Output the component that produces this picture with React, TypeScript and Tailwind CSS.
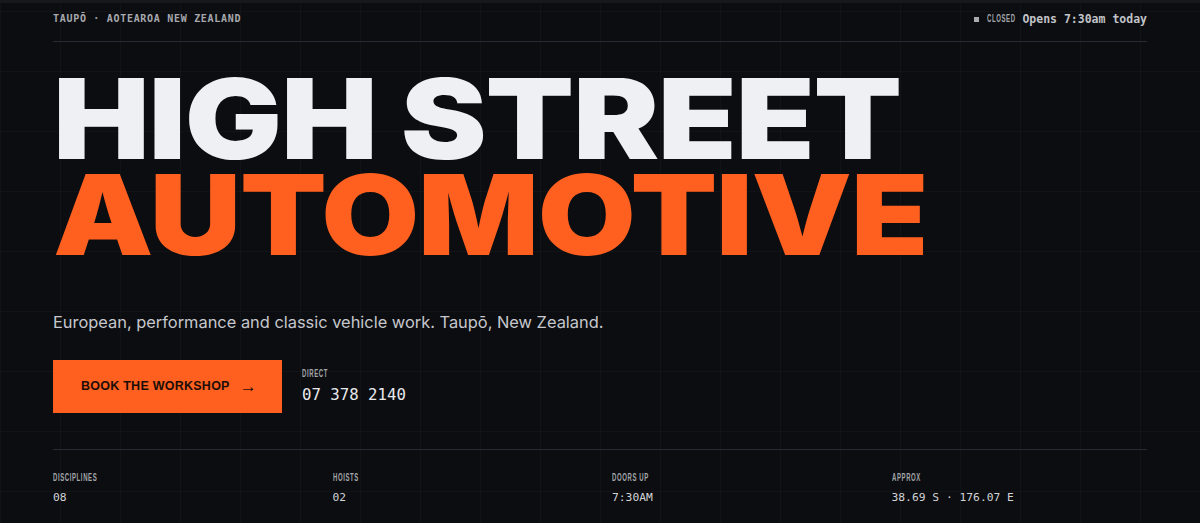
import React from "react";

const mono = "font-['DejaVu_Sans_Mono','Liberation_Mono',monospace]";

function Tiny({ children }: { children: React.ReactNode }) {
  return (
    <span className="inline-block origin-left scale-x-[0.6] whitespace-nowrap font-['Liberation_Sans',Arial,sans-serif] text-[10px] font-bold uppercase leading-[10px] tracking-[0.1em] text-[#a3a5ab]">
      {children}
    </span>
  );
}

const stats = [
  { label: "Disciplines", value: "08" },
  { label: "Hoists", value: "02" },
  { label: "Doors up", value: "7:30AM" },
  { label: "Approx", value: "38.69 S · 176.07 E" },
];

export default function App() {
  return (
    <div className="min-h-[523px] w-full overflow-hidden border-t-[3px] border-[#17181c] bg-[#0c0d10] bg-[linear-gradient(to_right,rgba(255,255,255,0.025)_1px,transparent_1px),linear-gradient(to_bottom,rgba(255,255,255,0.025)_1px,transparent_1px)] bg-[size:60px_60px] bg-[position:0px_8px]">
      <div className="px-[53px]">
        {/* top bar */}
        <div className="flex items-center justify-between border-b border-[#272a33] pt-[9px] pb-[15px]">
          <span className={`${mono} text-[10px] font-bold leading-[14px] tracking-[0.07em] text-[#a6a8ae]`}>
            TAUPŌ · AOTEAROA NEW ZEALAND
          </span>
          <div className="flex items-center">
            <span className="mr-[8px] h-[5px] w-[5px] bg-[#a9abb0]" />
            <Tiny>Closed</Tiny>
            <span className={`${mono} -ml-[12px] text-[11.5px] font-bold leading-[14px] text-[#c1c3c8]`}>
              Opens 7:30am today
            </span>
          </div>
        </div>

        {/* heading */}
        <h1 className="mt-[29px] font-['Inter','Liberation_Sans',sans-serif] text-[111px] font-black uppercase leading-[96px] tracking-[-0.01em]">
          <span className="block origin-left scale-x-[1.163] whitespace-nowrap text-[#eef0f4]">High Street</span>
          <span className="block origin-left scale-x-[1.14] whitespace-nowrap text-[#ff5f1f]">Automotive</span>
        </h1>

        {/* subtitle */}
        <p className="mt-[47px] font-['Inter','Liberation_Sans',sans-serif] text-[16.4px] leading-[24px] text-[#c6c8ce]">
          European, performance and classic vehicle work. Taupō, New Zealand.
        </p>

        {/* actions */}
        <div className="mt-[26px] flex items-start gap-5">
          <button className="flex h-[53px] w-[229px] items-center gap-[10px] bg-[#ff5f1f] pl-7 font-['Liberation_Sans',Arial,sans-serif] text-[12.5px] font-bold tracking-[0.02em] text-[#1c0e07]">
            BOOK THE WORKSHOP <span className="text-[17px] font-normal leading-none">→</span>
          </button>
          <div className="flex flex-col pt-[9px]">
            <Tiny>Direct</Tiny>
            <span className={`${mono} mt-[7px] text-[15.7px] leading-[18px] text-[#e8e9ec]`}>07 378 2140</span>
          </div>
        </div>

        {/* stats */}
        <div className="mt-[36px] grid grid-cols-4 gap-6 border-t border-[#272a33] pt-[23px]">
          {stats.map((s) => (
            <div key={s.label} className="flex flex-col">
              <Tiny>{s.label}</Tiny>
              <span className={`${mono} mt-[8px] text-[11.3px] leading-[14px] text-[#d2d3d7]`}>{s.value}</span>
            </div>
          ))}
        </div>
      </div>
    </div>
  );
}
